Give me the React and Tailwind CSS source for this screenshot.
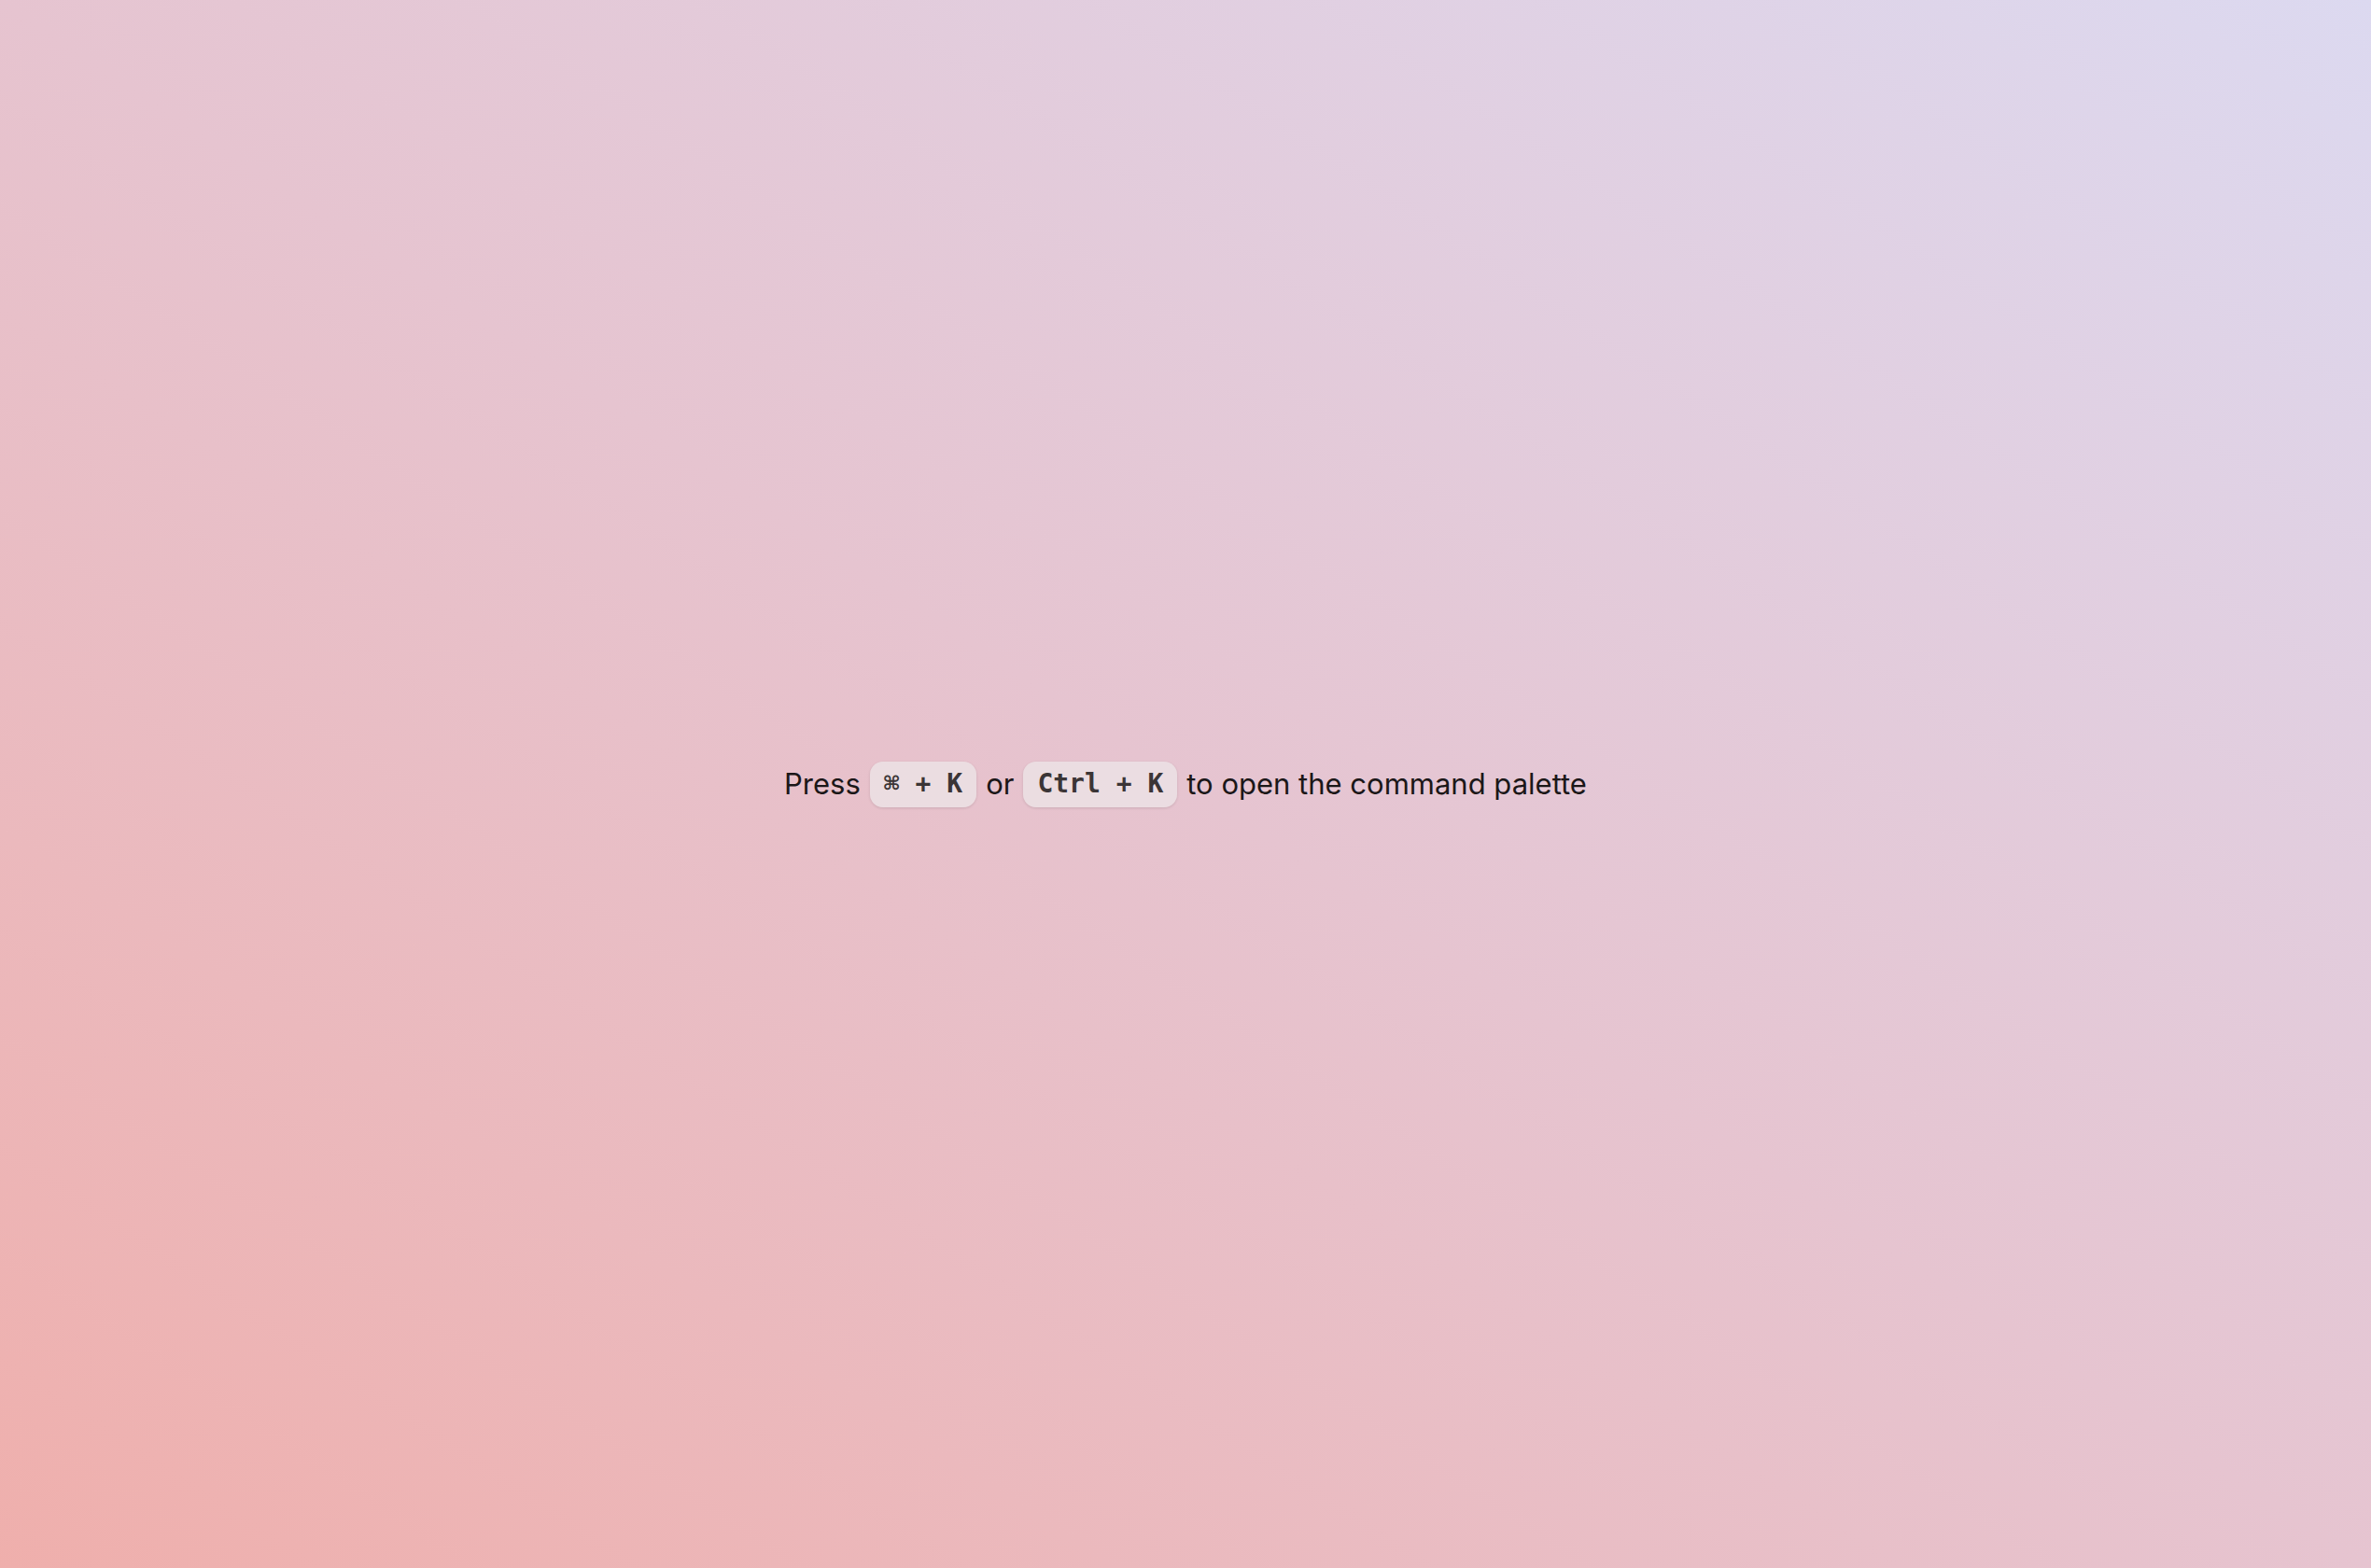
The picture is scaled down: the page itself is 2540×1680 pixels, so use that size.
const Kbd = ({ children }) => (
  <kbd className="inline-flex items-center h-[49px] px-[15px] rounded-[14px] bg-[#ece3e6]/80 text-[#3b3536] text-[28px] font-bold font-['DejaVu_Sans_Mono',monospace] shadow-[0_1px_3px_rgba(0,0,0,0.12)]">
    {children}
  </kbd>
);

export default function App() {
  return (
    <div className="min-h-screen w-full flex items-center justify-center bg-linear-to-tr from-[#efafac] via-[#e6c4d0] to-[#dcd9f0]">
      <p className="flex items-center gap-[10px] text-[31px] text-[#1b1718] font-['Inter',sans-serif]">
        <span>Press</span>
        <Kbd>⌘ + K</Kbd>
        <span>or</span>
        <Kbd>Ctrl + K</Kbd>
        <span>to open the command palette</span>
      </p>
    </div>
  );
}
